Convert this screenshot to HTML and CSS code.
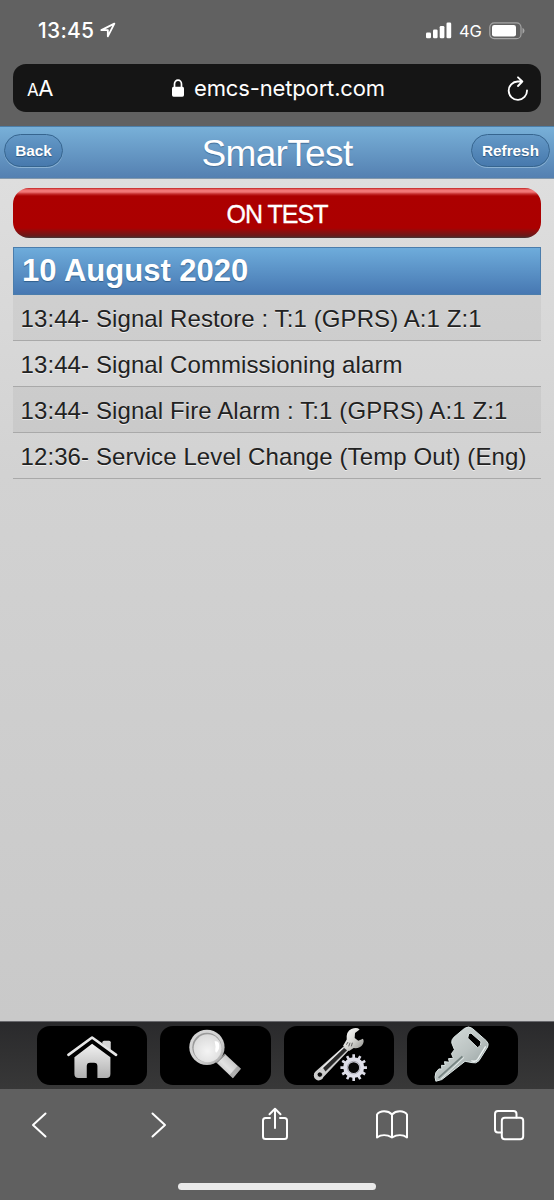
FILE: index.html
```html
<!DOCTYPE html>
<html lang="en">
<head>
<meta charset="utf-8">
<title>SmarTest</title>
<link rel="stylesheet" href="styles.css">
</head>
<body>
<div class="phone">
  <div class="browser-top">
    <div class="status">
      <span class="clock">13:45</span>
      <svg class="arrow" width="16" height="16" viewBox="0 0 48 48"><path d="M43 5 4 24.500H23.500V43Z" fill="none" stroke="#fff" stroke-width="5.500" stroke-linejoin="round"/></svg>
      <svg class="signal" width="26" height="17" viewBox="0 0 26 17" fill="#fff"><rect x="0" y="10.500" width="5" height="5.700" rx="1.300"/><rect x="7" y="7.500" width="4.600" height="8.700" rx="1.300"/><rect x="13.700" y="4" width="4.700" height="12.200" rx="1.300"/><rect x="20.500" y=".5" width="4.700" height="15.700" rx="1.300"/></svg>
      <span class="network">4G</span>
      <svg class="battery" width="36" height="18" viewBox="0 0 36 18"><rect x=".8" y=".8" width="31.200" height="15.900" rx="4.500" fill="none" stroke="#a5a5a5" stroke-width="1.200"/><rect x="3" y="3" width="24" height="11.500" rx="2.300" fill="#fff"/><path d="M33.500 5.800q2 .8 2 3t-2 3z" fill="#a5a5a5"/></svg>
    </div>
    <div class="address">
      <span class="text-size"><span class="small-a">A</span>A</span>
      <span class="site"><svg width="14" height="18" viewBox="0 0 14 18"><path d="M3.500 8.500V5a3.500 3.900 0 0 1 7 0v3.500" fill="none" stroke="#fff" stroke-width="1.700"/><rect x="1" y="7.700" width="12" height="10" rx="1.600" fill="#fff"/></svg><span class="domain">emcs-netport.com</span></span>
      <svg class="reload" width="22" height="26" viewBox="0 0 66 78" fill="none" stroke="#fff" stroke-width="5.500" stroke-linecap="round" stroke-linejoin="round"><path d="M60 46A27.500 27.500 0 1 1 32 19.500H46M33 7 46 19.500 33 33"/></svg>
    </div>
  </div>
  <header class="app-bar">
    <a class="pill back">Back</a>
    <h1 class="title">SmarTest</h1>
    <a class="pill refresh">Refresh</a>
  </header>
  <main class="content">
    <div class="state"><span class="state-text">ON TEST</span></div>
    <h2 class="date"><span class="date-text">10 August 2020</span></h2>
    <ul class="events">
      <li class="event shaded">13:44- Signal Restore : T:1 (GPRS) A:1 Z:1</li>
      <li class="event">13:44- Signal Commissioning alarm</li>
      <li class="event shaded">13:44- Signal Fire Alarm : T:1 (GPRS) A:1 Z:1</li>
      <li class="event">12:36- Service Level Change (Temp Out) (Eng)</li>
    </ul>
  </main>
  <nav class="tabs">
    <a class="tab"><svg viewBox="50 48 331 177">
      <defs><linearGradient id="silver" x1="0" y1="0" x2="0" y2="1"><stop offset="0" stop-color="#f2f2f2"/><stop offset="1" stop-color="#b0b0b0"/></linearGradient></defs>
      <path d="M246 110V97q0-5 5-5h15q5 0 5 5v33z" fill="#d4d4d4"/>
      <path d="M144 139 215 87 287 139" fill="none" stroke="#000" stroke-width="12"/>
      <path d="M144 134.500 215 82.500 287 134.500" fill="none" stroke="#e6e6e6" stroke-width="8" stroke-linecap="round" stroke-linejoin="round"/>
      <path d="M215 101 270 142V192q0 12-12 12H231V168q0-10-10-10H209q-10 0-10 10v36H174q-12 0-12-12V142Z" fill="url(#silver)"/>
    </svg></a>
    <a class="tab"><svg viewBox="30 48 332 177">
      <defs>
        <radialGradient id="lens" cx=".5" cy=".6" r=".6"><stop offset="0" stop-color="#f4f4f4"/><stop offset="1" stop-color="#dadada"/></radialGradient>
        <linearGradient id="rim" x1="0" y1="0" x2="1" y2="1"><stop offset="0" stop-color="#d8d8d8"/><stop offset=".6" stop-color="#d0d0d0"/><stop offset="1" stop-color="#a0a0a0"/></linearGradient>
        <linearGradient id="grip" x1="0" y1="1" x2="1" y2="0"><stop offset="0" stop-color="#a0a0a0"/><stop offset=".45" stop-color="#e2e2e2"/><stop offset="1" stop-color="#aaa"/></linearGradient>
      </defs>
      <path d="M200 158 226 133 273 176 249 205Z" fill="url(#grip)"/>
      <path d="M239 195 263 168 273 176 249 205Z" fill="#777" opacity=".45"/>
      <path d="M199 158 226 132" stroke="#888" stroke-width="5"/>
      <circle cx="171" cy="112" r="53" fill="url(#rim)"/>
      <circle cx="171" cy="112" r="44" fill="#9a9a9a"/>
      <circle cx="173" cy="115" r="42" fill="url(#lens)"/>
      <path d="M194 94q13-3 14 12t-9 22q-5-2-2-18z" fill="#fff"/>
    </svg></a>
    <a class="tab"><svg viewBox="39 48 333 177">
      <defs><linearGradient id="steel" x1="0" y1="0" x2="1" y2="1"><stop offset="0" stop-color="#fff"/><stop offset=".5" stop-color="#d8d8d4"/><stop offset="1" stop-color="#8c8c88"/></linearGradient></defs>
      <path d="M222 106 134 185A15 15 0 1 0 158 201L236 119Z" fill="#ccc"/>
      <path d="M220 114 157 174 164 185 229 121Z" fill="#292929"/>
      <path d="M217 114 151 176" stroke="#f3f3f3" stroke-width="3"/>
      <circle cx="147" cy="194" r="8" fill="#0b0b0b" stroke="#eee" stroke-width="2"/>
      <path d="M217 107 228 88Q226 64 242 57T267 58L253 69 252 84 263 92 277 86Q282 94 275 105T249 114L235 123Z" fill="url(#steel)"/>
      <path d="M232 96l-5 8M238 98l-4 11M245 98l-3 11" stroke="#444" stroke-width="2.500"/>
      <g stroke="#dcdce6" stroke-width="8"><path d="M249 133V213M209 173H289M229 138.400 269 207.600M283.600 153 214.400 193M269 138.400 229 207.600M214.400 153 283.600 193"/></g>
      <circle cx="249" cy="173" r="24" fill="#080808" stroke="#dfdfe9" stroke-width="15"/>
      <circle cx="249" cy="173" r="19" fill="none" stroke="#aaaab4" stroke-width="3"/>
    </svg></a>
    <a class="tab"><svg viewBox="35 48 333 177">
      <defs><linearGradient id="metal" x1="0" y1="0" x2=".8" y2="1"><stop offset="0" stop-color="#dce2e1"/><stop offset=".55" stop-color="#bcc4c3"/><stop offset="1" stop-color="#8f9b9a"/></linearGradient></defs>
      <path d="M208 55Q221 46 232 55L274 92Q283 101 278 111L252 152Q243 162 231 158L210 154 140 209 122 214Q117 202 122 188L131 177 140 177 139 166 150 167 148 155 163 157 160 146 175 145 169 131 178 119 170 99Q168 89 177 81Z" fill="url(#metal)" stroke="#dce6e5" stroke-width="3" stroke-linejoin="round"/>
      <path d="M202 139 130 204" stroke="#748280" stroke-width="5"/>
      <path d="M207 142 138 207" stroke="#e4ecea" stroke-width="3"/>
      <path d="M229 152Q241 157 248 148L272 109" fill="none" stroke="#eef4f3" stroke-width="4"/>
      <path d="M221 71 228 69 258 95 256 106 248 113 218 84Z" fill="#000" stroke="#dce4e3" stroke-width="3"/>
    </svg></a>
  </nav>
  <div class="browser-bottom">
    <div class="tools">
      <svg width="16" height="26" viewBox="0 0 16 26"><path d="M14.500 1.500 2 13 14.500 24.500"/></svg>
      <svg class="forward" width="16" height="26" viewBox="0 0 16 26"><path d="M1.500 1.500 14 13 1.500 24.500"/></svg>
      <svg class="share" width="28" height="34" viewBox="0 0 28 34"><path d="M9 11H4.500Q2 11 2 13.500V29.500Q2 32 4.500 32H23.500Q26 32 26 29.500V13.500Q26 11 23.500 11H19M14 21V2M8.500 7.300 14 1.800 19.500 7.300"/></svg>
      <svg class="book" width="34" height="30" viewBox="0 0 34 30"><path d="M17 4.500C13 .3 5 .3 2 4.500V27.500C6 24.500 12 24.500 17 27.500 22 24.500 28 24.500 32 27.500V4.500C29 .3 21 .3 17 4.500V27.500"/></svg>
      <svg class="pages" width="32" height="32" viewBox="0 0 32 32"><path d="M8.500 23.500H5Q2 23.500 2 20.500V5Q2 2 5 2H20.500Q23.500 2 23.500 5V8.500"/><rect x="8.800" y="8.800" width="21.400" height="21.400" rx="3"/></svg>
    </div>
    <div class="home-line"></div>
  </div>
</div>
</body>
</html>
```
FILE: styles.css
```css
* { box-sizing: border-box; }
body { margin: 0; font-family: "Liberation Sans", Arial, sans-serif; }
svg { display: block; flex: none; }
h1, h2, ul { margin: 0; padding: 0; }
span { white-space: nowrap; }

.phone { width: 554px; height: 1200px; display: flex; flex-direction: column; overflow: hidden; background: #606060; }

.browser-top { height: 126px; flex: none; color: #fff; background: #616161; font-family: Inter, sans-serif; }
.status { height: 64px; display: flex; align-items: center; padding: 0 29px 3px 38px; }
.clock { width: 58px; font-size: 21px; font-weight: 500; letter-spacing: .25px; }
.arrow { margin: -1px 0 0 4px; }
.signal { margin: -1px 0 0 auto; }
.network { width: 22px; margin: 1px 0 0 7px; font-size: 16.500px; font-weight: 400; letter-spacing: -.2px; }
.battery { margin-left: 8px; }
.address { display: flex; align-items: center; height: 48px; margin: 0 13px; padding: 0 12px 0 14px; border-radius: 13px; background: #151515; }
.text-size { width: 60px; font-size: 22px; letter-spacing: -.5px; }
.small-a { font-size: 17px; }
.site { display: flex; align-items: center; gap: 9px; margin: 0 auto; }
.domain { font-size: 22px; letter-spacing: -.15px; }
.reload { margin-left: 38px; }

.app-bar { height: 53px; flex: none; display: flex; align-items: center; justify-content: space-between; padding: 0 4px; color: #fff; border-top: 1px solid #4d7fa9; border-bottom: 1px solid #8298ac; background: linear-gradient(#78b0d8, #5480b1); }
.pill { display: flex; align-items: center; justify-content: center; height: 33px; margin-top: -4px; border: 1px solid #36658f; border-radius: 17px; font-size: 15.300px; font-weight: bold; color: #fff; background: linear-gradient(#6499c7, #4779ad); box-shadow: 0 1px 0 #8bb2d3; text-shadow: 0 1px 1px #2c567d; }
.back { width: 59px; }
.refresh { width: 79px; }
.title { flex: 1; text-align: center; padding: 3px 0 0 20px; font-size: 37px; line-height: 42px; font-weight: normal; letter-spacing: -.65px; text-shadow: 0 1px 1px #456f99; margin-right: 0; }

.content { flex: 1; padding: 9px 13px 0; background: linear-gradient(#dedede, #d2d2d2 35%, #c9c9c9); }
.state { display: flex; align-items: center; justify-content: center; height: 50px; border-radius: 16px; background: linear-gradient(#c02020 0, #f17777 2px, #f17777 4px, #c52b2b 6px, #ac0000 8px, #ab0000 40px, #8f0c0c 43px, #671a1a 48px, #433636 50px); color: #fff; }
.state-text { font-size: 25px; letter-spacing: -1px; padding-top: 3px; -webkit-text-stroke: .3px #fff; }
.date { display: flex; align-items: center; height: 48px; margin-top: 9px; padding: 0 8px; border: 1px solid #4b7dac; background: linear-gradient(#6eacdb, #4778b2); color: #fff; font-size: 31px; text-shadow: 0 1px 1px #315f8c; }
.events { list-style: none; }
.event { height: 46px; padding: 10px 7.500px 0; border-bottom: 1px solid #a9a9a9; font-size: 24px; line-height: 28px; letter-spacing: .1px; white-space: nowrap; color: #222; text-shadow: 0 1px 0 #eee; }
.shaded { background: rgba(0, 0, 0, .045); }

.tabs { height: 68px; flex: none; display: flex; gap: 13px; padding: 4px 0 5px 36.500px; border-top: 1px solid #68686c; background: linear-gradient(#2a2a2c, #383838); }
.tab { width: 110.500px; height: 59px; border-radius: 13px; overflow: hidden; background: #000; }
.tab svg { width: 100%; height: 100%; }

.browser-bottom { height: 111px; flex: none; background: #606060; }
.tools { height: 72px; display: flex; align-items: center; padding: 0 29px 0 31px; }
.tools svg { fill: none; stroke: #fff; stroke-width: 2; stroke-linecap: round; stroke-linejoin: round; }
.tools .forward { margin-left: 104px; }
.tools .share { margin: -2px 0 0 94px; }
.tools .book { margin-left: 86px; }
.tools .pages { margin-left: 84px; }
.home-line { width: 198px; height: 7px; margin: 22px auto 0; border-radius: 4px; background: #e9e9e9; }
```
